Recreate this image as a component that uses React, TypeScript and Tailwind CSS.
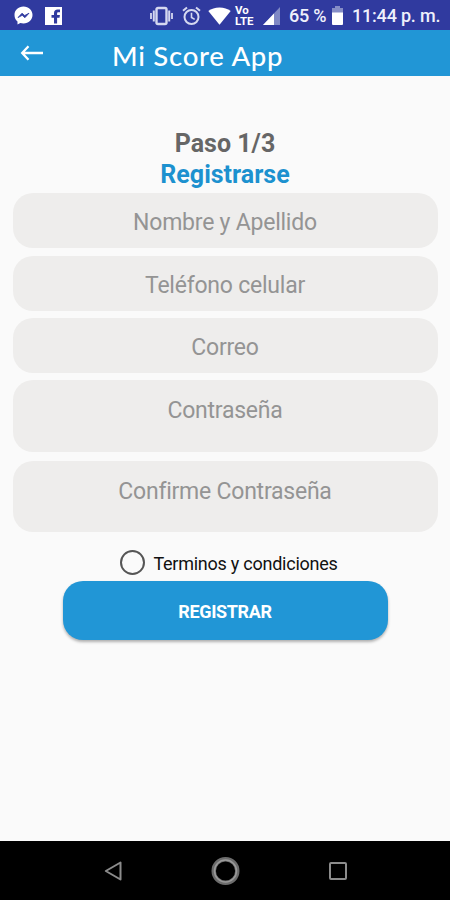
const fields = [
  { label: "Nombre y Apellido", box: "h-[55px] mb-2 pt-[15px]" },
  { label: "Teléfono celular", box: "h-[55px] mb-[7px] pt-[15px]" },
  { label: "Correo", box: "h-[55px] mb-[7px] pt-[15px]" },
  { label: "Contraseña", box: "h-[72px] mb-[9px] pt-[16px]" },
  { label: "Confirme Contraseña", box: "h-[71px] pt-[16px]" },
];

function Messenger() {
  return (
    <svg className="ml-[14px] h-[19px] w-[19px]" viewBox="0 0 19 19">
      <path
        d="M9.5.5C4.300.5.500 4.100.500 9c0 2.700 1.100 4.900 3 6.400V18.500l2.800-1.500c1 .3 2.100.5 3.200.5 5.200 0 9-3.700 9-8.500S14.700.5 9.500.5z"
        fill="#fff"
      />
      <path d="M4 11.600 8 7.200l2.700 2.300L15 7.200l-4.100 4.500-2.700-2.400z" fill="#303a9f" stroke="#303a9f" strokeWidth=".8" />
    </svg>
  );
}

function Facebook() {
  return (
    <svg className="ml-[12px] h-[18px] w-[17px]" viewBox="0 0 17 18">
      <path d="M0 0h17v18H0z" fill="#fff" />
      <path
        d="M9 16.500v-5.700H6.500V8H9V6.200C9 3.800 10.400 2.500 12.600 2.500H15v2.700h-1.500c-1 0-1.400.4-1.400 1.300V8h2.800l-.4 2.800h-2.400v5.700z"
        fill="#303a9f"
      />
    </svg>
  );
}

function Vibrate() {
  return (
    <svg className="h-5 w-[23px]" viewBox="0 0 23 20" fill="none" stroke="#d5d8f0">
      <rect x="6.500" y="2" width="10" height="16" rx="1.500" strokeWidth="2.400" />
      <path d="M3.800 4.500v11M19.200 4.500v11" strokeWidth="2" />
      <path d="M1 7v6M22 7v6" strokeWidth="1.800" />
    </svg>
  );
}

function Alarm() {
  return (
    <svg className="ml-[9px] h-5 w-[19px]" viewBox="0 0 19 20" fill="none" stroke="#d5d8f0" strokeWidth="2">
      <circle cx="9.500" cy="11" r="7" />
      <path d="M9.500 6.800v4.700l3.200 1.900" strokeWidth="1.600" />
      <path d="M1 4.800 5 1.500M18 4.800l-4-3.300" />
    </svg>
  );
}

function Wifi() {
  return (
    <svg className="ml-[7px] h-[18px] w-[23px]" viewBox="0 0 23 18">
      <path d="M11.500 17.800.3 4C3.300 1.600 7.100.4 11.500.4S19.700 1.600 22.700 4z" fill="#fff" />
    </svg>
  );
}

function Signal() {
  return (
    <svg className="ml-[7px] h-[18px] w-[17px]" viewBox="0 0 17 18">
      <path d="M17 0v18H0z" fill="#7f88c5" />
      <path d="M11 6.400V18H0z" fill="#fff" />
    </svg>
  );
}

function Battery() {
  return (
    <svg className="ml-[5px] h-[19px] w-[11px]" viewBox="0 0 11 19">
      <path d="M3 0h5v2h3v5H0V2h3z" fill="#858dc6" />
      <path d="M0 6.500h11V18a1 1 0 0 1-1 1H1a1 1 0 0 1-1-1z" fill="#fff" />
    </svg>
  );
}

function StatusBar() {
  return (
    <div className="flex h-[30px] items-center bg-[#303a9f] pt-px text-[18px] leading-5 font-medium whitespace-nowrap text-[#eef0fb]">
      <Messenger />
      <Facebook />
      <div className="ml-[88px] flex items-center">
        <Vibrate />
        <Alarm />
        <Wifi />
        <div className="ml-[4px] flex w-[21px] flex-col text-[11.5px] leading-[11px] font-bold text-white">
          <span>Vo</span>
          <span>LTE</span>
        </div>
        <Signal />
        <span className="ml-[9px] w-[38px] tracking-[-0.2px]">65 %</span>
        <Battery />
        <span className="ml-[9px] tracking-[-0.2px]">11:44 p. m.</span>
      </div>
    </div>
  );
}

function Header() {
  return (
    <header className="flex h-[46px] items-center bg-[#2196d6] text-white">
      <svg className="ml-[20px] h-4 w-6" viewBox="0 0 24 16" fill="none" stroke="#fff" strokeWidth="2.300">
        <path d="M23 8H2.500M8.500 1.300 2.200 8l6.300 6.700" />
      </svg>
      <h1 className="mt-[6px] ml-[68px] font-['Lato'] text-[27.500px] leading-8 font-medium tracking-[0.750px] whitespace-nowrap">
        Mi Score App
      </h1>
    </header>
  );
}

function NavBar() {
  return (
    <nav className="flex h-[59px] items-center justify-between bg-black pr-[103px] pl-[104px]">
      <svg className="h-5 w-[18px]" viewBox="0 0 18 20" fill="none" stroke="#8c8c8c" strokeWidth="2">
        <path d="M16.500 1.500v17L1.800 10z" strokeLinejoin="round" />
      </svg>
      <svg className="h-[30px] w-[30px]" viewBox="0 0 30 30" fill="none">
        <circle cx="14.500" cy="15" r="11.800" stroke="#6c6c6c" strokeWidth="4.400" />
        <circle cx="14.500" cy="15" r="11" stroke="#9a9a9a" strokeWidth="1.500" />
      </svg>
      <svg className="h-[18px] w-[18px]" viewBox="0 0 18 18" fill="none" stroke="#8c8c8c" strokeWidth="2">
        <rect x="1" y="1" width="16" height="16" rx="1" />
      </svg>
    </nav>
  );
}

export default function App() {
  return (
    <div className="flex h-[900px] w-[450px] flex-col overflow-hidden bg-[#fafafa] font-['Roboto',sans-serif]">
      <StatusBar />
      <Header />
      <main className="flex flex-1 flex-col items-center pt-[52px]">
        <h2 className="text-[25px] leading-[31px] font-bold text-[#666]">Paso 1/3</h2>
        <h3 className="mb-[3px] text-[25px] leading-[31px] font-bold text-[#1c91cf]">Registrarse</h3>
        <form className="flex w-[425px] flex-col">
          {fields.map((field) => (
            <div key={field.label} className={`flex shrink-0 justify-center rounded-[20px] bg-[#eeedec] ${field.box}`}>
              <span className="text-[23px] leading-[30px] tracking-[-0.23px] text-[#949494]">{field.label}</span>
            </div>
          ))}
        </form>
        <label className="mt-[18px] mr-[-8px] flex items-center gap-[8px]">
          <span className="h-[25px] w-[25px] rounded-full border-2 border-[#555]" />
          <span className="pt-[2px] text-[18px] leading-[23px] tracking-[-0.25px] whitespace-nowrap text-[#111]">
            Terminos y condiciones
          </span>
        </label>
        <button
          type="button"
          className="mt-[6px] h-[59px] w-[325px] rounded-[20px] bg-[#2196d6] pt-[2px] text-[18px] font-bold tracking-[-0.35px] text-white shadow-[0_2px_3px_rgba(0,0,0,0.3)]"
        >
          REGISTRAR
        </button>
      </main>
      <NavBar />
    </div>
  );
}
